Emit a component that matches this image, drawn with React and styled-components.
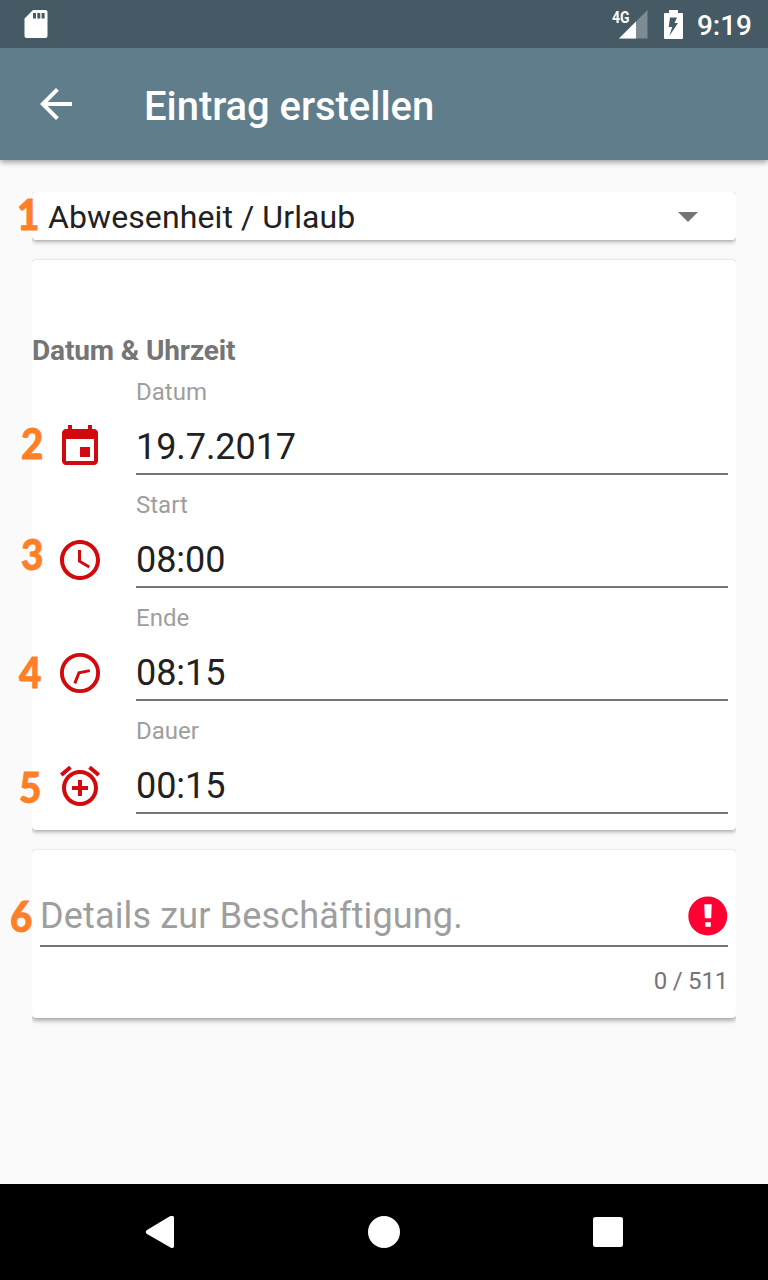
import React from 'react';
import styled, { createGlobalStyle } from 'styled-components';

const GlobalStyle = createGlobalStyle`
  * { box-sizing: border-box; }
  body { margin: 0; background: #fafafa; font-family: Roboto, sans-serif; color: #212121; }
  svg { display: block; flex: none; }
`;

const Screen = styled.div`
  width: 768px;
  height: 1280px;
  display: flex;
  flex-direction: column;
  background: #fafafa;
  overflow: hidden;
`;

const StatusBar = styled.header`
  height: 48px;
  flex: none;
  display: flex;
  align-items: center;
  padding: 0 16px 0 24px;
  background: #455a64;
  color: #fff;
`;

const StatusGroup = styled.div`
  display: flex;
  align-items: center;
  margin-left: auto;
`;

const Network = styled.span`
  font-size: 17px;
  font-weight: 700;
  line-height: 16px;
  width: 18px;
  margin: 0 -11px 14px 0;
  transform: scaleX(0.82);
  transform-origin: left;
`;

const BatteryIcon = styled.svg`
  margin-left: 16px;
`;

const Clock = styled.span`
  font-size: 28px;
  font-weight: 500;
  line-height: 34px;
  padding-top: 4px;
  margin-left: 14px;
`;

const AppBar = styled.div`
  height: 112px;
  flex: none;
  display: flex;
  align-items: center;
  padding-left: 32px;
  gap: 64px;
  background: #607d8b;
  color: #fff;
  box-shadow: 0 2px 6px rgba(0, 0, 0, 0.4);
  clip-path: inset(0 0 -10px 0);
`;

const Title = styled.h1`
  margin: 0;
  padding-top: 6px;
  font-size: 40px;
  font-weight: 500;
  line-height: 48px;
  letter-spacing: -0.05px;
`;

const Content = styled.main`
  flex: 1;
  padding: 32px 32px 0;
  display: flex;
  flex-direction: column;
`;

const CardShade = styled.section`
  position: relative;
  margin-bottom: ${(p) => p.$gap || 0}px;
`;

const Card = styled.div`
  height: ${(p) => p.$height}px;
  padding: ${(p) => p.$pad || 0};
  background: #fff;
  border-radius: 4px;
  box-shadow: 0 ${(p) => (p.$raised ? 3 : 2)}px 4px rgba(0, 0, 0, 0.3), 0 0 2px rgba(0, 0, 0, 0.14);
  clip-path: inset(${(p) => (p.$flatTop ? 0 : -3)}px 0 -8px 0);
`;

const SelectCard = styled(Card)`
  display: flex;
  align-items: center;
  justify-content: space-between;
  font-size: 32px;
  line-height: 46px;
  letter-spacing: 0.1px;
`;

const Heading = styled.h2`
  margin: 0;
  padding-top: 1px;
  height: 24px;
  font-size: 28px;
  line-height: 24px;
  font-weight: 700;
  letter-spacing: -0.13px;
  color: #757575;
`;

const Row = styled.div`
  height: 113px;
  display: flex;
  align-items: flex-end;
  padding: 0 8px 0 24px;
  gap: 32px;
`;

const IconSlot = styled.div`
  width: 48px;
  height: 48px;
  margin-bottom: 4px;
  color: #d20a0e;
`;

const Field = styled.div`
  flex: 1;
  height: 97px;
  border-bottom: 2px solid #757575;
`;

const Label = styled.div`
  font-size: 24px;
  line-height: 28px;
  color: #9e9e9e;
  margin-bottom: 20px;
`;

const Value = styled.div`
  font-size: 36px;
  line-height: 42px;
  letter-spacing: -0.07px;
`;

const DetailsField = styled.div`
  height: 52px;
  display: flex;
  justify-content: space-between;
  border-bottom: 2px solid #757575;
  font-size: 36px;
  line-height: 42px;
  letter-spacing: 0.15px;
  color: #9e9e9e;
`;

const Counter = styled.div`
  margin-top: 20px;
  text-align: right;
  font-size: 24px;
  line-height: 28px;
  letter-spacing: -0.2px;
  color: #757575;
`;

const Marker = styled.span`
  position: absolute;
  left: ${(p) => p.$x}px;
  top: ${(p) => p.$y}px;
  font-family: Lato, sans-serif;
  font-size: 42px;
  font-weight: 900;
  line-height: 42px;
  color: #ff7f27;
  -webkit-text-stroke: 0.8px #ff7f27;
  transform: scaleX(0.92);
  transform-origin: left;
`;

const NavBar = styled.nav`
  height: 96px;
  flex: none;
  display: flex;
  align-items: center;
  justify-content: center;
  gap: 192px;
  background: #000;
`;

const icons = {
  date: (
    <path d="M17 12h-5v5h5v-5zM16 1v2H8V1H6v2H5c-1.11 0-1.99.9-1.99 2L3 19c0 1.1.89 2 2 2h14c1.1 0 2-.9 2-2V5c0-1.1-.9-2-2-2h-1V1h-2zm3 18H5V8h14v11z" />
  ),
  start: (
    <path d="M11.99 2C6.47 2 2 6.48 2 12s4.47 10 9.99 10C17.52 22 22 17.52 22 12S17.52 2 11.99 2zM12 20c-4.42 0-8-3.58-8-8s3.58-8 8-8 8 3.58 8 8-3.58 8-8 8zm.5-13H11v6l5.25 3.15.75-1.23-4.5-2.67z" />
  ),
  end: (
    <g fill="none" stroke="currentColor">
      <circle cx="12" cy="12" r="9.05" strokeWidth="1.95" />
      <path d="M16.9 10.8 11.5 11.9 9.4 17.2" strokeWidth="1.5" />
    </g>
  ),
  duration: (
    <path d="M7.88 3.39L6.6 1.86 2 5.71l1.29 1.53 4.59-3.85zM22 5.72l-4.6-3.86-1.29 1.53 4.6 3.86L22 5.72zM12 4c-4.97 0-9 4.03-9 9s4.02 9 9 9c4.97 0 9-4.03 9-9s-4.03-9-9-9zm0 16c-3.87 0-7-3.13-7-7s3.13-7 7-7 7 3.13 7 7-3.13 7-7 7zm1-11h-2v3H8v2h3v3h2v-3h3v-2h-3V9z" />
  ),
};

const fields = [
  { icon: 'date', label: 'Datum', value: '19.7.2017' },
  { icon: 'start', label: 'Start', value: '08:00' },
  { icon: 'end', label: 'Ende', value: '08:15' },
  { icon: 'duration', label: 'Dauer', value: '00:15' },
];

export default function App() {
  return (
    <>
      <GlobalStyle />
      <Screen>
        <StatusBar>
          <svg width="24" height="28" viewBox="0 0 24 28">
            <path fill="#fff" fillRule="evenodd" d="M9 0H21.5Q23.5 0 23.5 2V26Q23.5 28 21.5 28H2.5Q.5 28 .5 26V8.500ZM9 3V8.500H12V3ZM13.300 3V8.500H16.300V3ZM17.600 3V8.500H20.600V3Z" />
          </svg>
          <StatusGroup>
            <Network>4G</Network>
            <svg width="29" height="29" viewBox="0 0 29 29">
              <path fill="#fff" fillOpacity=".3" d="M28.500 0V28.500H0Z" />
              <path fill="#fff" d="M17 11.500V28.500H0Z" />
            </svg>
            <BatteryIcon width="19" height="29" viewBox="0 0 19 29">
              <path fill="#fff" fillRule="evenodd" d="M5 0H14V3H18Q19 3 19 4V28Q19 29 18 29H1Q0 29 0 28V4Q0 3 1 3H5ZM6 7.500 4.700 17H8.200L5.300 26 14 13H10.500L13 7.500Z" />
            </BatteryIcon>
            <Clock>9:19</Clock>
          </StatusGroup>
        </StatusBar>
        <AppBar>
          <svg width="48" height="48" viewBox="0 0 24 24" fill="#fff">
            <path d="M20 11H7.830l5.590-5.590L12 4l-8 8 8 8 1.410-1.410L7.830 13H20v-2z" />
          </svg>
          <Title>Eintrag erstellen</Title>
        </AppBar>
        <Content>
          <CardShade $gap={20}>
            <SelectCard $height={48} $pad="2px 38px 0 16px" $flatTop>
              <span>Abwesenheit / Urlaub</span>
              <svg width="20" height="10" viewBox="0 0 20 10">
                <path fill="#757575" d="M0 0H20L10 10Z" />
              </svg>
            </SelectCard>
            <Marker $x={-15} $y={1}>1</Marker>
          </CardShade>
          <CardShade $gap={20}>
            <Card $height={570} $pad="78px 0 0">
              <Heading>Datum &amp; Uhrzeit</Heading>
              {fields.map((f) => (
                <Row key={f.label}>
                  <IconSlot>
                    <svg width="48" height="48" viewBox="0 0 24 24" fill="currentColor">{icons[f.icon]}</svg>
                  </IconSlot>
                  <Field>
                    <Label>{f.label}</Label>
                    <Value>{f.value}</Value>
                  </Field>
                </Row>
              ))}
            </Card>
            <Marker $x={-11} $y={162}>2</Marker>
            <Marker $x={-11} $y={273}>3</Marker>
            <Marker $x={-13} $y={391}>4</Marker>
            <Marker $x={-13} $y={506}>5</Marker>
          </CardShade>
          <CardShade>
            <Card $height={168} $pad="45px 8px 0" $raised>
              <DetailsField>
                <span>Details zur Beschäftigung.</span>
                <svg width="40" height="42" viewBox="0 0 40 42">
                  <circle cx="19.800" cy="21" r="19.500" fill="#ff0033" />
                  <path fill="#fff" d="M16.300 9.300H23.700L23.200 23.200H16.800ZM17.200 27.200H22.800V31.800H17.200Z" />
                </svg>
              </DetailsField>
              <Counter>0 / 511</Counter>
            </Card>
            <Marker $x={-22} $y={45}>6</Marker>
          </CardShade>
        </Content>
        <NavBar>
          <svg width="32" height="32" viewBox="0 0 32 32">
            <path fill="#fff" d="M25.500.4Q30 -1.500 30 2V30Q30 33 26.500 31.500L3 18Q.5 16 3 14Z" />
          </svg>
          <svg width="32" height="32" viewBox="0 0 32 32">
            <circle cx="16" cy="16" r="16" fill="#fff" />
          </svg>
          <svg width="32" height="32" viewBox="0 0 32 32">
            <rect x="1" y="1" width="30" height="30" rx="2.500" fill="#fff" />
          </svg>
        </NavBar>
      </Screen>
    </>
  );
}
